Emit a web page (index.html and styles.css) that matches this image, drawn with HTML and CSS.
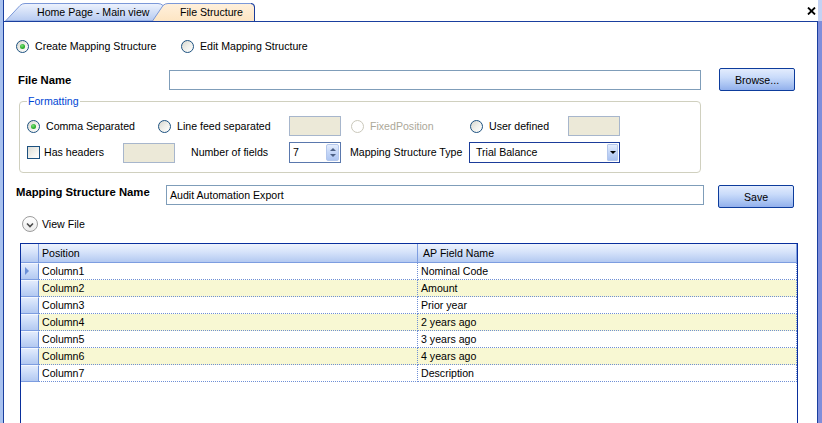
FILE: index.html
```html
<!DOCTYPE html>
<html>
<head>
<meta charset="utf-8">
<title>File Structure</title>
<link rel="stylesheet" href="styles.css">
</head>
<body>
<div class="window">
  <div class="edge-l"></div>
  <div class="main">
    <div class="tabstrip">
      <div class="tab tab-home">
        <svg class="tab-bg" width="166" height="21" viewBox="0 0 166 21">
          <defs>
            <linearGradient id="gHome" x1="0" y1="0" x2="0" y2="1">
              <stop offset="0" stop-color="#eef3fd"/>
              <stop offset="1" stop-color="#b6caf1"/>
            </linearGradient>
          </defs>
          <path d="M0.5 21 L15 5.5 Q17 3.5 20 3.5 L153 3.5 Q156 3.5 158 5.5 L166 14 L166 21 Z" fill="url(#gHome)" stroke="#7b98d8" stroke-width="1"/>
        </svg>
        <span class="tab-label">Home Page - Main view</span>
      </div>
      <div class="tab tab-file">
        <svg class="tab-bg" width="103" height="21" viewBox="0 0 103 21">
          <defs>
            <linearGradient id="gFile" x1="0" y1="0" x2="0" y2="1">
              <stop offset="0" stop-color="#fff0dc"/>
              <stop offset="1" stop-color="#fde5c3"/>
            </linearGradient>
          </defs>
          <path d="M0.5 21 L11 5.5 Q13 3.5 16 3.5 L99 3.5 Q102.5 3.5 102.5 7 L102.5 21" fill="url(#gFile)" stroke="#7b98d8" stroke-width="1"/>
          <path d="M99 3.5 Q102.5 3.5 102.5 7 L102.5 21" fill="none" stroke="#1b3c9a" stroke-width="1"/>
        </svg>
        <span class="tab-label">File Structure</span>
      </div>
      <div class="tab-spacer"></div>
      <div class="close">
        <svg width="9" height="8" viewBox="0 0 9 8">
          <path d="M1 0.5 L8 7.5 M8 0.5 L1 7.5" stroke="#000" stroke-width="1.8" fill="none"/>
        </svg>
      </div>
    </div>
    <div class="panel">
      <div class="mode-row">
        <label class="opt opt-create"><span class="radio checked"></span><span>Create Mapping Structure</span></label>
        <label class="opt"><span class="radio"></span><span>Edit Mapping Structure</span></label>
      </div>

      <div class="file-row">
        <span class="bold-label file-label">File Name</span>
        <div class="textbox file-input"></div>
        <button class="btn btn-browse">Browse...</button>
      </div>

      <div class="group">
        <span class="legend">Formatting</span>
        <div class="g-row g-row1">
          <label class="opt c-comma"><span class="radio checked"></span><span>Comma Separated</span></label>
          <label class="opt c-line"><span class="radio"></span><span>Line feed separated</span></label>
          <div class="greybox"></div>
          <label class="opt c-fixed disabled"><span class="radio disabled"></span><span>FixedPosition</span></label>
          <label class="opt c-user"><span class="radio"></span><span>User defined</span></label>
          <div class="greybox"></div>
        </div>
        <div class="g-row g-row2">
          <label class="opt c-headers"><span class="checkbox"></span><span>Has headers</span></label>
          <div class="greybox"></div>
          <span class="c-numlabel">Number of fields</span>
          <div class="spin">
            <span class="spin-val">7</span>
            <span class="spin-btns">
              <span class="spin-up"></span>
              <span class="spin-down"></span>
            </span>
          </div>
          <span class="c-typelabel">Mapping Structure Type</span>
          <div class="combo">
            <span class="combo-val">Trial Balance</span>
            <span class="combo-btn"><span class="combo-arrow"></span></span>
          </div>
        </div>
      </div>

      <div class="msn-row">
        <span class="bold-label msn-label">Mapping Structure Name</span>
        <div class="textbox msn-input">Audit Automation Export</div>
        <button class="btn btn-save">Save</button>
      </div>

      <div class="view-row">
        <span class="view-icon">
          <svg width="8" height="6" viewBox="0 0 8 6"><path d="M1 1.5 L4 4.5 L7 1.5" stroke="#4a4a4a" stroke-width="1.6" fill="none"/></svg>
        </span>
        <span class="view-text">View File</span>
      </div>

      <div class="grid">
        <div class="g-head">
          <div class="rh"></div>
          <div class="hc hc1">Position</div>
          <div class="hc hc2">AP Field Name</div>
        </div>
        <div class="g-line">
          <div class="rh current"><span class="tri"></span></div>
          <div class="cell c1">Column1</div>
          <div class="cell c2">Nominal Code</div>
        </div>
        <div class="g-line alt">
          <div class="rh"></div>
          <div class="cell c1">Column2</div>
          <div class="cell c2">Amount</div>
        </div>
        <div class="g-line">
          <div class="rh"></div>
          <div class="cell c1">Column3</div>
          <div class="cell c2">Prior year</div>
        </div>
        <div class="g-line alt">
          <div class="rh"></div>
          <div class="cell c1">Column4</div>
          <div class="cell c2">2 years ago</div>
        </div>
        <div class="g-line">
          <div class="rh"></div>
          <div class="cell c1">Column5</div>
          <div class="cell c2">3 years ago</div>
        </div>
        <div class="g-line alt">
          <div class="rh"></div>
          <div class="cell c1">Column6</div>
          <div class="cell c2">4 years ago</div>
        </div>
        <div class="g-line">
          <div class="rh"></div>
          <div class="cell c1">Column7</div>
          <div class="cell c2">Description</div>
        </div>
      </div>
    </div>
  </div>
  <div class="edge-r"></div>
</div>
</body>
</html>
```
FILE: styles.css
```css
* { box-sizing: border-box; }

html, body {
  margin: 0;
  padding: 0;
  background: #ffffff;
  overflow: hidden;
}

body {
  font-family: "Liberation Sans", Arial, sans-serif;
  font-size: 10.6px;
  line-height: 13px;
  color: #000;
}

.window {
  display: flex;
  width: 822px;
  height: 423px;
  overflow: hidden;
}

.edge-l {
  width: 3px;
  flex: none;
  background: #a9c2ef;
}

.edge-r {
  width: 4px;
  flex: none;
  background: linear-gradient(to bottom, #c3d2f4 0, #c3d2f4 21px, #7f8edb 21px, #7f8edb 100%);
}

.main {
  width: 815px;
  flex: none;
  border-left: 1px solid #1a3f9e;
  display: flex;
  flex-direction: column;
}

/* ---------- tabs ---------- */
.tabstrip {
  height: 21px;
  flex: none;
  display: flex;
  align-items: flex-start;
}

.tab {
  position: relative;
  height: 21px;
  flex: none;
}

.tab-bg {
  position: absolute;
  left: 0;
  top: 0;
}

.tab-label {
  position: relative;
  display: block;
  padding-top: 6px;
  white-space: nowrap;
}

.tab-home {
  width: 166px;
  margin-left: 1px;
}

.tab-home .tab-label { padding-left: 32px; }

.tab-file {
  width: 103px;
  margin-left: -19px;
}

.tab-file .tab-label { padding-left: 28px; }

.tab-spacer { flex: 1; }

.close {
  width: 9px;
  height: 8px;
  margin: 7px 2px 0 0;
  display: flex;
}

/* ---------- panel ---------- */
.panel {
  flex: 1;
  min-height: 0;
  border-top: 1px solid #1a3f9e;
  border-right: 1px solid #1a3f9e;
  display: flex;
  flex-direction: column;
}

.opt {
  display: flex;
  align-items: center;
  white-space: nowrap;
  flex: none;
}

.radio {
  position: relative;
  width: 13px;
  height: 13px;
  flex: none;
  margin-right: 6px;
  border-radius: 50%;
  border: 1px solid #1c5180;
  background: linear-gradient(135deg, #d6d6ce 0%, #efefea 50%, #ffffff 100%);
}

.radio.checked::after {
  content: "";
  position: absolute;
  left: 3px;
  top: 3px;
  width: 5px;
  height: 5px;
  border-radius: 50%;
  background: radial-gradient(circle at 40% 35%, #7ee07e 0%, #2db22d 55%, #1a8f1a 100%);
}

.radio.disabled {
  border-color: #cac8bb;
  background: #ffffff;
}

.opt.disabled { color: #aca899; }

.checkbox {
  width: 13px;
  height: 13px;
  flex: none;
  margin-right: 4px;
  border: 1px solid #1c5180;
  background: linear-gradient(135deg, #dcdcd5 0%, #f3f3ef 60%, #ffffff 100%);
}

.bold-label {
  font-weight: bold;
  font-size: 11.3px;
  white-space: nowrap;
  flex: none;
}

.textbox {
  border: 1px solid #7f9db9;
  background: #fff;
  height: 20px;
  padding: 3px 0 0 3px;
  white-space: nowrap;
  flex: none;
}

.btn {
  flex: none;
  width: 76px;
  height: 23px;
  padding: 0;
  border: 1px solid #0d3c9c;
  border-radius: 2px;
  background: linear-gradient(to bottom, #e3ecfd 0%, #c9dbfa 40%, #a9c3f2 75%, #92b0ec 100%);
  font-family: "Liberation Sans", Arial, sans-serif;
  font-size: 10.6px;
  color: #000;
}

.mode-row {
  display: flex;
  align-items: center;
  height: 15px;
  margin: 17px 0 0 12px;
}

.opt-create { width: 165px; }

.file-row {
  display: flex;
  align-items: center;
  height: 23px;
  margin: 14px 0 0 14px;
}

.file-label {
  width: 151px;
  padding-top: 1px;
}

.file-input { width: 532px; }

.btn-browse { margin-left: 18px; }

/* ---------- formatting group ---------- */
.group {
  position: relative;
  margin: 10px 0 0 15px;
  width: 682px;
  height: 72px;
  border: 1px solid #d0d0bf;
  border-radius: 4px;
  padding: 14px 0 0 7px;
}

.legend {
  position: absolute;
  left: 7px;
  top: -7px;
  padding: 0 1px;
  background: #fff;
  color: #0046d5;
  line-height: 13px;
}

.g-row {
  display: flex;
  align-items: center;
}

.g-row1 { height: 20px; }

.g-row2 {
  height: 21px;
  margin-top: 6px;
}

.greybox {
  flex: none;
  width: 52px;
  height: 20px;
  background: #ece9d8;
  border: 1px solid #a7b6cc;
}

.c-comma { width: 131px; }
.c-line { width: 131px; }
.c-fixed { width: 119px; margin-left: 10px; }
.c-user { width: 98px; }

.c-headers { width: 96px; }

.c-numlabel {
  width: 114px;
  padding-left: 16px;
  white-space: nowrap;
  flex: none;
}

.spin {
  flex: none;
  width: 52px;
  height: 21px;
  border: 1px solid #5a78ad;
  background: #fff;
  display: flex;
  align-items: stretch;
}

.spin-val {
  flex: 1;
  padding: 3px 0 0 3px;
}

.spin-btns {
  width: 13px;
  margin: 1px 1px 1px 0;
  display: flex;
  flex-direction: column;
  border-radius: 2px;
  background: linear-gradient(to bottom, #e4edfd 0%, #c4d6f7 50%, #aec6f2 100%);
  border: 1px solid #b4c7ec;
  align-items: center;
  justify-content: center;
  gap: 3px;
}

.spin-up {
  width: 0;
  height: 0;
  border-left: 3px solid transparent;
  border-right: 3px solid transparent;
  border-bottom: 3px solid #4d6185;
}

.spin-down {
  width: 0;
  height: 0;
  border-left: 3px solid transparent;
  border-right: 3px solid transparent;
  border-top: 3px solid #4d6185;
}

.c-typelabel {
  width: 119px;
  margin-left: 9px;
  white-space: nowrap;
  flex: none;
}

.combo {
  flex: none;
  width: 151px;
  height: 21px;
  border: 1px solid #1b3c9a;
  background: #fff;
  display: flex;
  align-items: stretch;
}

.combo-val {
  flex: 1;
  padding: 3px 0 0 6px;
  white-space: nowrap;
}

.combo-btn {
  width: 11px;
  margin: 1px 1px 1px 0;
  border: 1px solid #b4c7ec;
  border-radius: 1px;
  background: linear-gradient(to bottom, #e4edfd 0%, #c4d6f7 50%, #a9c2f1 100%);
  display: flex;
  align-items: center;
  justify-content: center;
}

.combo-arrow {
  width: 0;
  height: 0;
  border-left: 3px solid transparent;
  border-right: 3px solid transparent;
  border-top: 3px solid #000;
}

/* ---------- name row ---------- */
.msn-row {
  display: flex;
  align-items: flex-start;
  height: 23px;
  margin: 12px 0 0 12px;
}

.msn-label {
  width: 150px;
  margin-top: 1px;
}

.msn-input { width: 538px; }

.btn-save { margin-left: 14px; }

.view-row {
  display: flex;
  align-items: center;
  height: 16px;
  margin: 8px 0 0 18px;
}

.view-icon {
  width: 16px;
  height: 16px;
  flex: none;
  border-radius: 50%;
  border: 1px solid #9c9c9c;
  background: linear-gradient(to bottom, #ffffff 0%, #ececec 100%);
  display: flex;
  align-items: center;
  justify-content: center;
  padding-top: 1px;
}

.view-text { margin-left: 4px; }

/* ---------- grid ---------- */
.grid {
  flex: 1;
  margin: 11px 0 0 16px;
  width: 778px;
  border: 1px solid #0a2f9c;
  border-bottom: none;
  background: #fff;
}

.g-head {
  display: flex;
  height: 19px;
  border-bottom: 1px solid #7d9de0;
  background: linear-gradient(to bottom, #eef3fd 0%, #d6e3fa 45%, #b3c9f1 100%);
}

.g-head .rh {
  width: 18px;
  flex: none;
  border-right: 1px solid #7d9de0;
}

.hc {
  flex: none;
  width: 379px;
  padding: 3px 0 0 3px;
  white-space: nowrap;
}

.hc1 { border-right: 1px solid #7d9de0; }
.hc2 {
  padding-left: 5px;
  border-right: 1px solid #7d9de0;
}

.g-line {
  display: flex;
  height: 17px;
}

.g-line .rh {
  width: 18px;
  flex: none;
  position: relative;
  border-right: 1px solid #6f93d9;
  border-bottom: 1px solid #7d9de0;
  border-top: 1px solid #f4f8ff;
  background: linear-gradient(to bottom, #e2ebfc 0%, #c9daf8 50%, #b3c9f1 100%);
}

.tri {
  position: absolute;
  left: 4px;
  top: 3px;
  width: 0;
  height: 0;
  border-top: 4px solid transparent;
  border-bottom: 4px solid transparent;
  border-left: 4px solid #6b8fd8;
}

.cell {
  flex: none;
  width: 379px;
  padding: 2px 0 0 3px;
  white-space: nowrap;
  border-right: 1px dotted #6f8fd5;
  border-bottom: 1px dotted #6f8fd5;
}

.g-line.alt .cell { background: #f8f8d3; }
```
